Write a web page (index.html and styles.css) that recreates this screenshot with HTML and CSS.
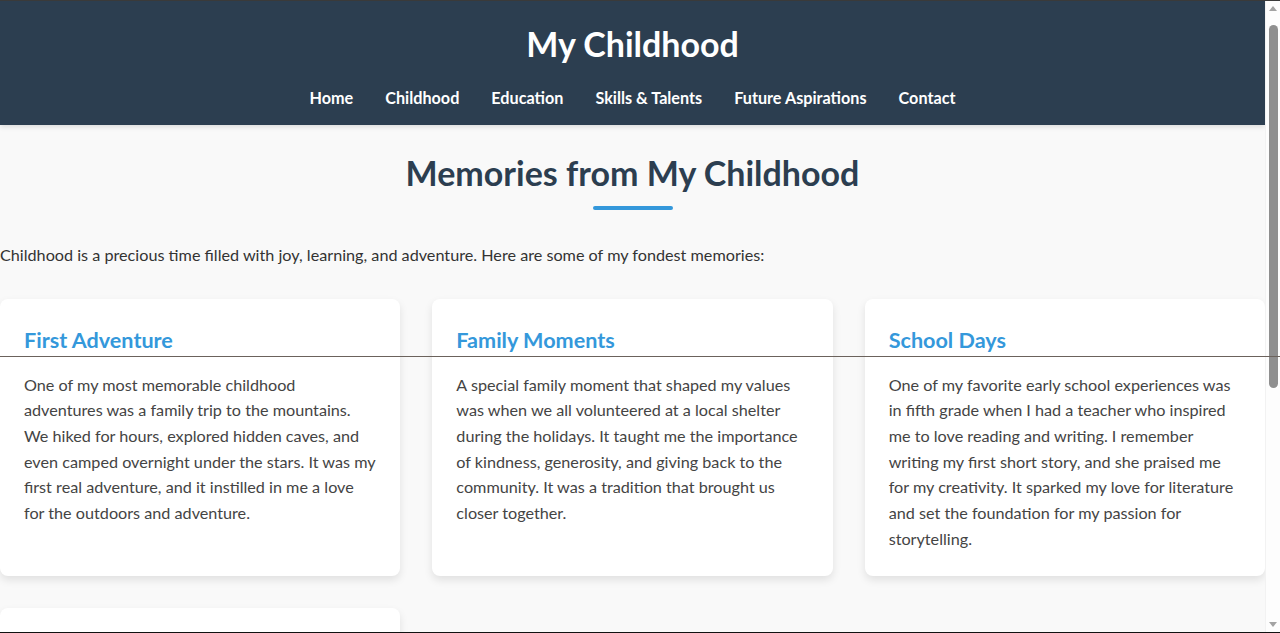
FILE: index.html
```html
<!DOCTYPE html>
<html lang="en">
<head>
<meta charset="utf-8">
<title>My Childhood</title>
<link rel="stylesheet" href="styles.css">
</head>
<body>
<header class="site-header">
  <h1 class="site-title">My Childhood</h1>
  <nav class="site-nav">
    <ul class="nav-list">
      <li><a href="#">Home</a></li>
      <li><a href="#">Childhood</a></li>
      <li><a href="#">Education</a></li>
      <li><a href="#">Skills &amp; Talents</a></li>
      <li><a href="#">Future Aspirations</a></li>
      <li><a href="#">Contact</a></li>
    </ul>
  </nav>
</header>
<main class="content">
  <section class="memories">
    <h2 class="section-title">Memories from My Childhood</h2>
    <div class="title-bar"></div>
    <p class="intro">Childhood is a precious time filled with joy, learning, and adventure. Here are some of my fondest memories:</p>
    <div class="card-grid">
      <article class="card">
        <h3 class="card-title">First Adventure</h3>
        <p class="card-text">One of my most memorable childhood adventures was a family trip to the mountains. We hiked for hours, explored hidden caves, and even camped overnight under the stars. It was my first real adventure, and it instilled in me a love for the outdoors and adventure.</p>
      </article>
      <article class="card">
        <h3 class="card-title">Family Moments</h3>
        <p class="card-text">A special family moment that shaped my values was when we all volunteered at a local shelter during the holidays. It taught me the importance of kindness, generosity, and giving back to the community. It was a tradition that brought us closer together.</p>
      </article>
      <article class="card">
        <h3 class="card-title">School Days</h3>
        <p class="card-text">One of my favorite early school experiences was in fifth grade when I had a teacher who inspired me to love reading and writing. I remember writing my first short story, and she praised me for my creativity. It sparked my love for literature and set the foundation for my passion for storytelling.</p>
      </article>
      <article class="card">
        <h3 class="card-title">Friendships</h3>
        <p class="card-text">Growing up, I made friends who shared my curiosity and sense of fun. We built forts, rode bikes around the neighborhood, and dreamed big dreams together.</p>
      </article>
    </div>
  </section>
</main>
<div class="scrollbar" aria-hidden="true">
  <div class="scroll-arrow up"></div>
  <div class="scroll-thumb"></div>
  <div class="scroll-arrow down"></div>
</div>
<div class="frame-top"></div>
<div class="frame-line"></div>
<div class="frame-bottom"></div>
</body>
</html>
```

FILE: styles.css
```css
* {
  box-sizing: border-box;
}

html, body {
  margin: 0;
  padding: 0;
}

body {
  background: #f9f9f9;
  color: #333;
  font-family: "Segoe UI", Lato, "Liberation Sans", sans-serif;
  font-size: 16.2px;
  padding-right: 15px;
}

.site-header {
  background: #2c3e50;
  color: #fff;
  text-align: center;
  padding: 20px 0 15px;
  box-shadow: 0 2px 5px rgba(0, 0, 0, 0.12);
}

.site-title {
  margin: 0;
  font-size: 34px;
  line-height: 48px;
  font-weight: 700;
}

.site-nav {
  margin-top: 18px;
}

.nav-list {
  list-style: none;
  margin: 0;
  padding: 0;
  display: flex;
  justify-content: center;
  gap: 32px;
}

.nav-list a {
  color: #fff;
  text-decoration: none;
  font-weight: 700;
  font-size: 16.2px;
  line-height: 24px;
  display: block;
}

.content {
  padding: 28px 0 40px;
}

.section-title {
  margin: 0;
  text-align: center;
  color: #2c3e50;
  font-size: 34px;
  line-height: 40px;
  font-weight: 700;
}

.title-bar {
  width: 80px;
  height: 4px;
  background: #3498db;
  border-radius: 2px;
  margin: 13px auto 0;
}

.intro {
  margin: 32px 0 31px;
  line-height: 25.6px;
  color: #333;
}

.card-grid {
  display: grid;
  grid-template-columns: repeat(3, 1fr);
  gap: 32px;
}

.card {
  background: #fff;
  border-radius: 8px;
  box-shadow: 0 4px 8px rgba(0, 0, 0, 0.1);
  padding: 24px;
}

.card-title {
  margin: 0 0 15px;
  color: #3498db;
  font-size: 21.6px;
  line-height: 34px;
  font-weight: 700;
}

.card-text {
  margin: 0;
  line-height: 25.7px;
  color: #444;
}

.scrollbar {
  position: fixed;
  top: 0;
  right: 0;
  bottom: 0;
  width: 15px;
  background: #fdfdfd;
  border-left: 1px solid #f2f2f2;
}

.scroll-arrow {
  position: absolute;
  left: 3px;
  width: 0;
  height: 0;
  border-left: 4.5px solid transparent;
  border-right: 4.5px solid transparent;
}

.scroll-arrow.up {
  top: 6px;
  border-bottom: 5px solid #a3a3a3;
}

.scroll-arrow.down {
  bottom: 6px;
  border-top: 5px solid #a3a3a3;
}

.scroll-thumb {
  position: absolute;
  top: 25px;
  left: 3px;
  width: 9px;
  height: 363px;
  background: #8f8f8f;
  border-radius: 5px;
}

.frame-top {
  position: fixed;
  top: 0;
  left: 0;
  right: 0;
  height: 1px;
  background: #3a3a3a;
}

.frame-line {
  position: fixed;
  top: 356px;
  left: 0;
  right: 0;
  height: 1px;
  background: #6b625c;
}

.frame-bottom {
  position: fixed;
  bottom: 0;
  left: 0;
  right: 0;
  height: 1px;
  background: #111;
}
```
